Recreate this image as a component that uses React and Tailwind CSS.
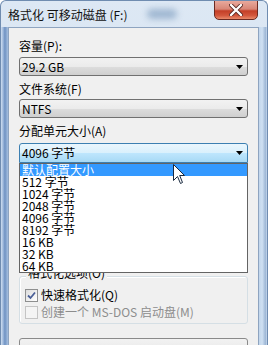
export default function App() {
  const items = ["默认配置大小", "512 字节", "1024 字节", "2048 字节", "4096 字节", "8192 字节", "16 KB", "32 KB", "64 KB"];
  const Arrow = () => (
    <svg width="7" height="4" viewBox="0 0 7 4" className="absolute right-[4px] top-1/2 -translate-y-1/2">
      <path d="M0 0 H7 L3.5 4 Z" fill="#000" />
    </svg>
  );
  return (
    <div className="relative w-[268px] h-[345px] overflow-hidden font-['Noto_Sans_CJK_SC',sans-serif] text-[12px] text-black bg-[linear-gradient(to_bottom,#dde8f4,#c8daee)] rounded-tl-[6px] rounded-tr-[6px] border-t border-l border-r border-[#6f8cb0] flex flex-col">
      {/* aero blur blob */}
      <div className="absolute left-[146px] top-[8px] w-[30px] h-[10px] rounded-full bg-[#86a3c3] blur-[3px] opacity-70" />
      {/* title bar */}
      <div className="h-[26px] shrink-0 flex items-center pl-[7px] pt-[2px] leading-[16px] text-[12px] text-[#111]">
        格式化 可移动磁盘 (F:)
      </div>
      {/* close button */}
      <div className="absolute top-[-1px] right-[9px] w-[44px] h-[20px] rounded-b-[5px] border border-[#6b2a22] bg-[linear-gradient(to_bottom,#e9a99c_0%,#d88677_45%,#c43f27_55%,#d2563c_80%,#e98a6a_100%)] flex items-center justify-center">
        <svg width="14" height="12" viewBox="0 0 14 12">
          <path d="M2 1 L12 11 M12 1 L2 11" stroke="#5a2a24" strokeWidth="4" strokeLinecap="round" />
          <path d="M2 1 L12 11 M12 1 L2 11" stroke="#fff" strokeWidth="2.4" strokeLinecap="round" />
        </svg>
      </div>
      <div className="flex flex-1">
        <div className="w-[7px] shrink-0 bg-[linear-gradient(to_right,#cfdef0_0%,#9fb9dc_30%,#6f92c2_55%,#a7c0e0_100%)]" />
        <div className="flex-1 border border-[#8ea4c0] bg-[#f0f0f0] px-[10px] pt-[10px] flex flex-col">
          <div className="h-[16px] leading-[16px]">容量(P):</div>
          <div className="relative mt-[3px] h-[19px] rounded-[3px] border border-[#707070] bg-[linear-gradient(to_bottom,#f2f2f2_0%,#ebebeb_50%,#dddddd_51%,#cfcfcf_100%)] pl-[2px] leading-[17px]">
            29.2 GB
            <Arrow />
          </div>
          <div className="mt-[5px] h-[16px] leading-[16px]">文件系统(F)</div>
          <div className="relative mt-[2px] h-[19px] rounded-[3px] border border-[#707070] bg-[linear-gradient(to_bottom,#f2f2f2_0%,#ebebeb_50%,#dddddd_51%,#cfcfcf_100%)] pl-[2px] leading-[17px]">
            NTFS
            <Arrow />
          </div>
          <div className="mt-[5px] h-[16px] leading-[16px]">分配单元大小(A)</div>
          <div className="relative mt-[4px] h-[20px] rounded-t-[3px] border border-[#3c7fb1] bg-[linear-gradient(to_bottom,#eaf6fd_0%,#d9f0fc_50%,#bee6fd_51%,#a7d9f5_100%)] pl-[2px] leading-[18px] z-10">
            4096 字节
            <Arrow />
            <div className="absolute left-[-1px] right-[-1px] top-[19px] border border-[#646464] bg-white">
              {items.map((t, i) => (
                <div
                  key={t}
                  className={
                    i === 0
                      ? "h-[12px] leading-[12px] pl-[2px] bg-[#3399ff] text-white"
                      : "h-[12px] leading-[12px] pl-[2px] text-black"
                  }
                >
                  {t}
                </div>
              ))}
            </div>
          </div>
          {/* group box */}
          <div className="relative mt-[113px] h-[48px] rounded-[3px] border border-[#d5dfe5] shadow-[inset_1px_1px_0_#ffffff]">
            <div className="absolute left-[6px] top-[-12px] px-[2px] bg-[#f0f0f0] leading-[16px]">格式化选项(O)</div>
            <div className="flex items-center mt-[11px] ml-[5px] h-[14px]">
              <div className="w-[13px] h-[13px] border border-[#8e8f8f] bg-[linear-gradient(135deg,#dcdcdc,#ffffff)] flex items-center justify-center">
                <svg width="9" height="9" viewBox="0 0 9 9">
                  <path d="M1 4.5 L3.5 7 L8 1.5" stroke="#4a5f97" strokeWidth="1.8" fill="none" />
                </svg>
              </div>
              <span className="ml-[3px] leading-[14px]">快速格式化(Q)</span>
            </div>
            <div className="flex items-center mt-[3px] ml-[5px] h-[14px]">
              <div className="w-[13px] h-[13px] border border-[#c4c4c4] bg-[#f4f4f4]" />
              <span className="ml-[3px] leading-[14px] text-[#8d8d8d]">创建一个 MS-DOS 启动盘(M)</span>
            </div>
          </div>
          <div className="mt-[14px] h-[23px] rounded-[3px] border border-[#8a8a8a] bg-[linear-gradient(to_bottom,#f2f2f2,#e2e2e2)]" />
        </div>
        <div className="w-[8px] shrink-0 bg-[linear-gradient(to_right,#c2d6ec_0%,#cfe0f2_40%,#9fb8d6_80%,#c6d8ee_100%)]" />
      </div>
      {/* mouse cursor */}
      <svg width="13" height="21" viewBox="0 0 13 21" className="absolute left-[172px] top-[163px] z-20">
        <path d="M0.5 0.5 L0.5 16.5 L4.5 12.5 L7.5 19.5 L9.5 18.5 L6.7 11.5 L11.5 11.5 Z" fill="#fff" stroke="#1a2a40" strokeWidth="1" strokeLinejoin="round" />
      </svg>
    </div>
  );
}
